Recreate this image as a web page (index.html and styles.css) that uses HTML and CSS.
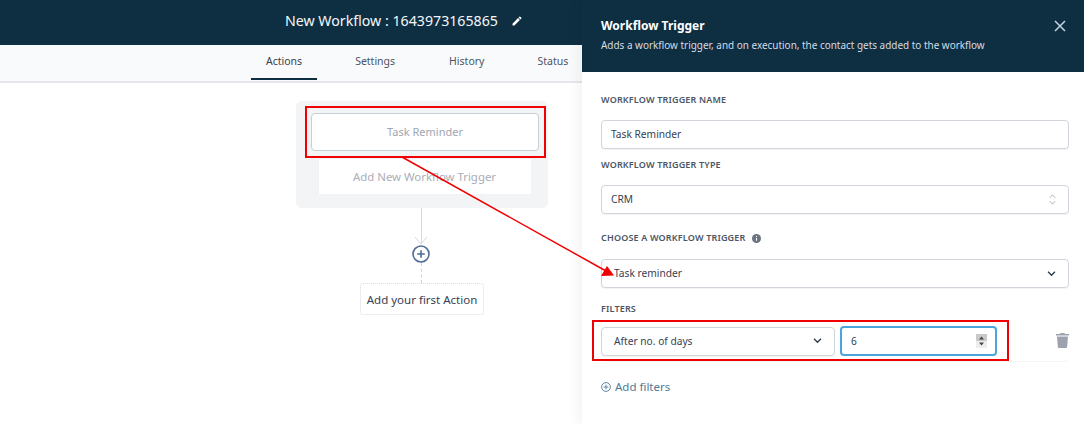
FILE: index.html
```html
<!DOCTYPE html>
<html lang="en">
<head>
<meta charset="utf-8">
<title>Workflow Trigger</title>
<link rel="stylesheet" href="styles.css">
</head>
<body>
<div class="app">
  <main class="main">
    <header class="topbar">
      <span class="wf-title">New Workflow : 1643973165865</span>
      <svg class="pencil" width="12" height="12" viewBox="0 0 24 24"><path fill="#fff" d="M3 17.25V21h3.75L17.81 9.94l-3.75-3.75L3 17.25zM20.71 7.04a1 1 0 0 0 0-1.41l-2.34-2.34a1 1 0 0 0-1.41 0l-1.83 1.83 3.75 3.75 1.83-1.83z"/></svg>
    </header>
    <nav class="tabs">
      <a class="tab active">Actions</a>
      <a class="tab">Settings</a>
      <a class="tab">History</a>
      <a class="tab">Status</a>
    </nav>
    <section class="canvas">
      <div class="trigger-card">
        <div class="trigger-item">Task Reminder</div>
        <div class="trigger-add">Add New Workflow Trigger</div>
      </div>
      <div class="line-solid"></div>
      <svg class="chevron" width="14" height="8" viewBox="0 0 14 8"><path d="M1 0l6 7 6-7" fill="none" stroke="#d5d9e0" stroke-width="1"/></svg>
      <svg class="plus" width="18" height="18" viewBox="0 0 18 18"><circle cx="9" cy="9" r="8" fill="#fff" stroke="#4f6d94" stroke-width="1.6"/><path d="M9 5.2v7.6M5.2 9h7.6" stroke="#4f6d94" stroke-width="1.6"/></svg>
      <div class="line-dashed"></div>
      <div class="action-add">Add your first Action</div>
    </section>
  </main>
  <aside class="drawer">
    <header class="drawer-head">
      <div>
        <h2 class="drawer-title">Workflow Trigger</h2>
        <p class="drawer-sub">Adds a workflow trigger, and on execution, the contact gets added to the workflow</p>
      </div>
      <svg class="close" width="14" height="14" viewBox="0 0 14 14"><path d="M2 2l10 10M12 2L2 12" stroke="#c6d3e4" stroke-width="1.5" fill="none"/></svg>
    </header>
    <div class="drawer-body">
      <label class="label first">WORKFLOW TRIGGER NAME</label>
      <div class="field">Task Reminder</div>
      <label class="label l-type">WORKFLOW TRIGGER TYPE</label>
      <div class="field field-select">
        <span>CRM</span>
        <svg width="7" height="13" viewBox="0 0 9 16"><path d="M1 6l3.500-4L8 6M1 10l3.500 4L8 10" fill="none" stroke="#9aa1ac" stroke-width="1"/></svg>
      </div>
      <label class="label l-choose">CHOOSE A WORKFLOW TRIGGER
        <svg class="info" width="9" height="9" viewBox="0 0 10 10"><circle cx="5" cy="5" r="5" fill="#6b7280"/><path d="M5 4.400v3.200M5 2.200v1.100" stroke="#fff" stroke-width="1.2"/></svg>
      </label>
      <div class="field field-select pick">
        <span>Task reminder</span>
        <svg width="9" height="6" viewBox="0 0 10 7"><path d="M1 1l4 4 4-4" fill="none" stroke="#2f3b4c" stroke-width="1.6"/></svg>
      </div>
      <label class="label l-filters">FILTERS</label>
      <div class="filter-row">
        <div class="field field-select pick filter-select">
          <span>After no. of days</span>
          <svg width="9" height="6" viewBox="0 0 10 7"><path d="M1 1l4 4 4-4" fill="none" stroke="#2f3b4c" stroke-width="1.6"/></svg>
        </div>
        <div class="number">
          <span>6</span>
          <div class="spin">
            <svg width="11" height="14" viewBox="0 0 11 14"><rect width="11" height="7" fill="#c9c9c9"/><rect y="7" width="11" height="7" fill="#ededed"/><path d="M5.500 2.500L8 5.500H3zM5.500 11.500L3 8.500h5z" fill="#444"/></svg>
          </div>
        </div>
        <svg class="trash" width="13" height="15" viewBox="0 0 13 15"><path fill="#9ca3af" d="M4.500 0h4l.5 1h4v1.600H0V1h4zM1 3.600h11l-.8 10.200a1.200 1.200 0 0 1-1.200 1.200H3a1.200 1.200 0 0 1-1.200-1.200z"/></svg>
      </div>
      <div class="add-filters">
        <svg width="10" height="10" viewBox="0 0 10 10"><circle cx="5" cy="5" r="4.400" fill="none" stroke="#4f7a96" stroke-width=".9"/><path d="M5 2.600v4.800M2.600 5h4.800" stroke="#4f7a96" stroke-width=".9"/></svg>
        <span>Add filters</span>
      </div>
    </div>
  </aside>
  <div class="mark mark-item"></div>
  <div class="mark mark-filter"></div>
  <svg class="arrow" width="1084" height="424" viewBox="0 0 1084 424">
    <path d="M402 157L606 271" stroke="#f00000" stroke-width="1.5" fill="none"/>
    <path d="M614 275.500L601 276L607 266z" fill="#f00000"/>
  </svg>
</div>
</body>
</html>
```
FILE: styles.css
```css
* { box-sizing: border-box; }
html, body { margin: 0; padding: 0; }
body { font-family: "Noto Sans", "Open Sans", sans-serif; background: #fff; color: #374151; overflow: hidden; }
.app { position: relative; width: 1084px; height: 424px; display: flex; overflow: hidden; }

.main { width: 582px; flex: none; display: flex; flex-direction: column; }
.topbar { height: 45px; background: #0e2e42; display: flex; align-items: center; padding-left: 285px; color: #fff; padding-bottom: 4px; }
.wf-title { font-size: 14.2px; line-height: 20px; color: #f4f7fa; }
.pencil { margin-left: 13px; }
.tabs { height: 38px; background: #f9fafb; border-bottom: 2px solid #e5e7eb; display: flex; padding-left: 251px; gap: 23px; }
.tab { padding: 8px 15px 0; height: 35px; font-size: 10.5px; line-height: 16px; color: #4b5563; }
.tab.active { color: #374151; border-bottom: 2px solid #0e2e42; height: 35px; }
.tab:nth-child(3) { margin-left: 1px; }

.canvas { flex: 1; position: relative; display: flex; flex-direction: column; align-items: center; padding: 18px 0 0 260px; }
.trigger-card { width: 252px; height: 107px; background: #f3f4f6; border-radius: 6px; display: flex; flex-direction: column; align-items: center; padding: 12px 0 0 6px; margin-left: 2px; flex: none; }
.trigger-item { width: 228px; height: 38px; background: #fff; border: 1px solid #c9ced6; border-radius: 4px; font-size: 11px; line-height: 36px; text-align: center; color: #a0a6b1; }
.trigger-add { width: 214px; height: 37px; margin: 7px 0 0 -1px; background: #fff; border: 1px dotted #e5e7eb; border-radius: 2px; font-size: 11.4px; line-height: 35px; text-align: center; color: #a9aeb8; }
.line-solid { width: 1px; height: 36px; background: #d5d9e0; flex: none; }
.chevron { margin-top: -7px; flex: none; }
.plus { margin-top: 0; flex: none; }
.line-dashed { height: 20px; width: 0; border-left: 1px dashed #cdd1d8; flex: none; }
.action-add { width: 124px; height: 32px; margin-left: 2px; border: 1px dotted #d9dce2; border-radius: 3px; background: #fff; font-size: 11.5px; line-height: 31px; text-align: center; color: #374151; flex: none; }

.drawer { width: 502px; flex: none; display: flex; flex-direction: column; background: #fff; box-shadow: -6px 0 10px rgba(20, 30, 50, .04); position: relative; }
.drawer-head { height: 72px; background: #0e2e42; padding: 16px 17px 0 19px; display: flex; justify-content: space-between; align-items: flex-start; }
.drawer-title { margin: 0; font-size: 12px; line-height: 20px; font-weight: 700; color: #fff; }
.drawer-sub { margin: 0; font-size: 9.95px; line-height: 18px; color: #d5dce3; white-space: nowrap; }
.close { margin-top: 3px; }
.drawer-body { padding: 0 15px 0 19px; position: relative; }
.label { display: block; font-size: 9px; line-height: 12px; font-weight: 600; color: #4b5563; letter-spacing: .17px; }
.label.first { margin-top: 22px; }
.l-choose { margin-top: 18px; display: flex; align-items: center; gap: 7px; }
.l-filters { margin-top: 15px; }
.field { height: 29px; margin-top: 14px; border: 1px solid #d1d5db; border-radius: 4px; box-shadow: 0 1px 1px rgba(0,0,0,.05); background: #fff; font-size: 10.2px; line-height: 27px; padding: 0 9px; color: #374151; }
.l-type { margin-top: 10px; }
.l-type + .field { margin-top: 14px; }
.l-choose + .field { margin-top: 15px; }
.field-select { display: flex; justify-content: space-between; align-items: center; padding-right: 12px; }
.pick { padding-left: 12px; font-size: 10.2px; color: #374151; }
.filter-row { margin-top: 6px; height: 41px; display: flex; align-items: center; border-bottom: 1px solid #f3f4f6; border-radius: 0 0 6px 6px; }
.filter-select { width: 234px; margin-top: 0; flex: none; }
.number { width: 157px; height: 30px; margin-left: 5px; border: 2px solid #4aa5dc; border-radius: 4px; display: flex; align-items: center; justify-content: space-between; padding: 0 8px 0 9px; font-size: 10.2px; color: #374151; flex: none; }
.spin { display: flex; align-items: center; }
.trash { margin: 0 0 2px 59px; flex: none; }
.add-filters { display: flex; align-items: center; gap: 4px; margin-top: 16px; color: #4f7a96; font-size: 11.5px; line-height: 18px; }

.mark { position: absolute; border: 2px solid #f00000; pointer-events: none; }
.mark-item { left: 305px; top: 106px; width: 241px; height: 52px; }
.mark-filter { left: 592px; top: 320px; width: 417px; height: 41px; }
.arrow { position: absolute; left: 0; top: 0; pointer-events: none; }
```
